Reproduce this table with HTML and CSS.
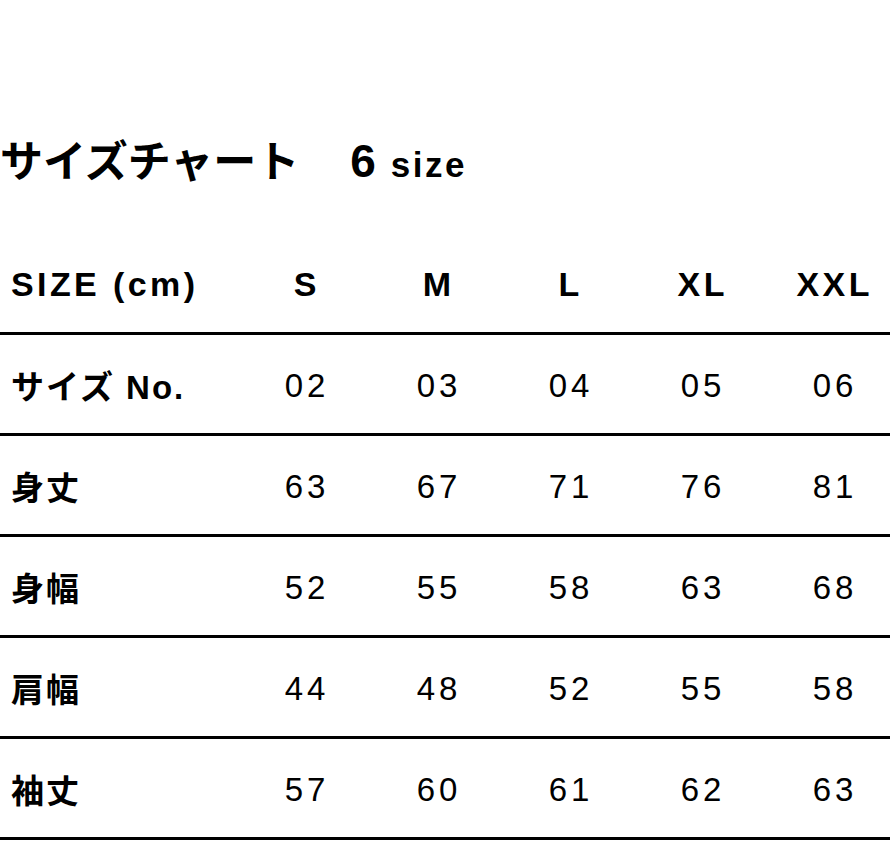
FILE: index.html
```html
<!DOCTYPE html>
<html lang="ja">
<head>
<meta charset="utf-8">
<link rel="stylesheet" href="styles.css">
</head>
<body>
<div class="page">
  <h1 class="title"><span class="jp">サイズチャート</span><span class="gap">　</span><span class="num">6</span> <span class="unit">size</span></h1>
  <table class="chart">
    <thead>
      <tr>
        <th class="label">SIZE (cm)</th>
        <th>S</th><th>M</th><th>L</th><th>XL</th><th>XXL</th>
      </tr>
    </thead>
    <tbody>
      <tr><th class="label">サイズ No.</th><td>02</td><td>03</td><td>04</td><td>05</td><td>06</td></tr>
      <tr><th class="label">身丈</th><td>63</td><td>67</td><td>71</td><td>76</td><td>81</td></tr>
      <tr><th class="label">身幅</th><td>52</td><td>55</td><td>58</td><td>63</td><td>68</td></tr>
      <tr><th class="label">肩幅</th><td>44</td><td>48</td><td>52</td><td>55</td><td>58</td></tr>
      <tr><th class="label">袖丈</th><td>57</td><td>60</td><td>61</td><td>62</td><td>63</td></tr>
    </tbody>
  </table>
</div>
</body>
</html>
```
FILE: styles.css
```css
html, body {
  margin: 0;
  padding: 0;
  background: #fff;
  overflow: hidden;
}
body {
  font-family: "Liberation Sans", "Noto Sans CJK JP", sans-serif;
  color: #000;
}
.page {
  width: 899px;
}
.title {
  margin: 0;
  padding-top: 130px;
  font-weight: 700;
  line-height: 56px;
  height: 56px;
  white-space: nowrap;
}
.title .jp, .title .gap {
  font-family: "Noto Sans CJK JP", sans-serif;
  font-size: 43px;
}
.title .num {
  font-size: 46px;
  margin-left: 8px;
}
.title .unit {
  font-size: 35px;
  letter-spacing: 2.5px;
  margin-left: 6px;
}
.chart {
  width: 899px;
  margin-top: 48px;
  border-collapse: collapse;
  table-layout: fixed;
}
.chart th, .chart td {
  height: 98px;
  padding: 0;
  text-align: center;
  vertical-align: middle;
  border-bottom: 3px solid #000;
  font-size: 33px;
  letter-spacing: 0.12em;
}
.chart thead th {
  font-weight: 700;
  font-size: 34px;
  letter-spacing: 0.1em;
  padding-left: 0.1em;
  padding-top: 2px;
  height: 96px;
}
.chart td {
  font-weight: 400;
  padding-left: 0.12em;
  padding-top: 4px;
  height: 94px;
}
.chart .label {
  width: 228px;
  text-align: left;
  padding-left: 11px;
  font-weight: 700;
}
.chart tbody .label {
  font-size: 33px;
  letter-spacing: 0.06em;
  padding-top: 2px;
  height: 96px;
}
.chart thead .label {
  padding-left: 11px;
  letter-spacing: 0.1em;
}
```
